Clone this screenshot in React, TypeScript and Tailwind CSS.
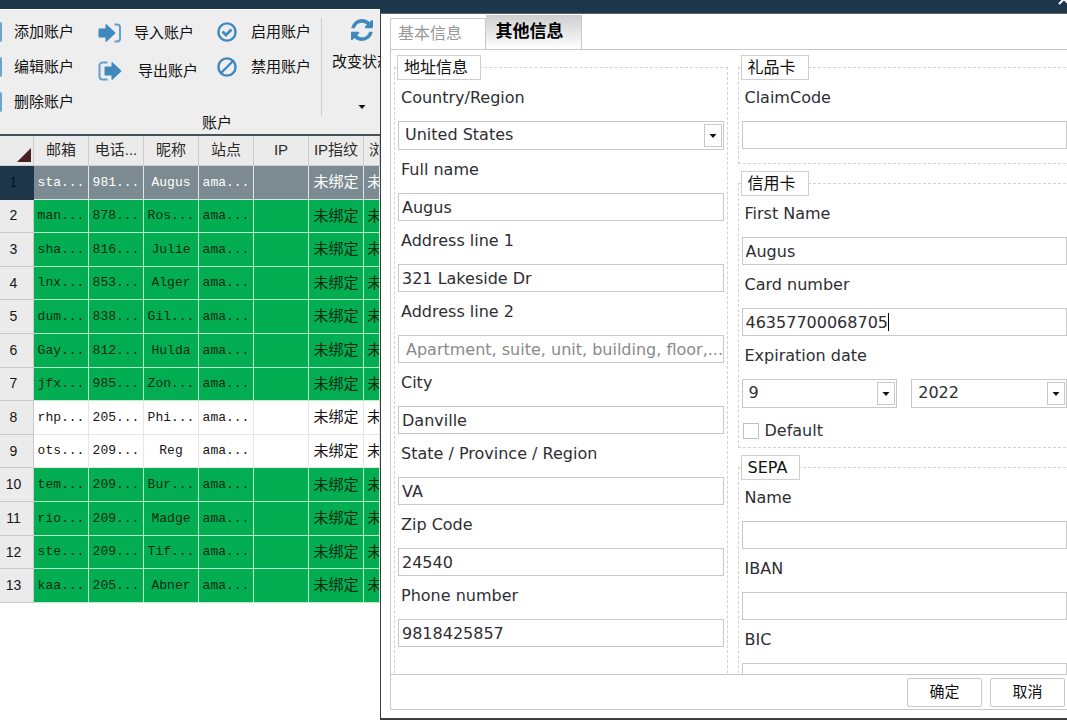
import React, { useState } from "react";

const cjk = "font-['Liberation_Sans','Noto_Sans_CJK_SC',sans-serif]";
const field = "font-['DejaVu_Sans','Noto_Sans_CJK_SC',sans-serif]";

function ImportIcon() {
  return (
    <svg viewBox="0 0 24 20" className="h-5 w-6 shrink-0" fill="none">
      <path d="M0.5 6.500q0-1 1-1h6V2q0-1.500 1.200-.6L17 9.300q.8.700 0 1.400l-8.300 7.900Q7.500 19.500 7.500 18v-3.500h-6q-1 0-1-1z" fill="#3f88c0" />
      <path d="M16.500 1.500h2.500a3 3 0 0 1 3 3v11a3 3 0 0 1-3 3h-2.500" stroke="#62a0cf" strokeWidth="2" />
    </svg>
  );
}

function ExportIcon() {
  return (
    <svg viewBox="0 0 24 20" className="h-5 w-6 shrink-0" fill="none">
      <path d="M6.500 6.500q0-1 1-1h6V2q0-1.500 1.200-.6L23 9.300q.8.700 0 1.400l-8.300 7.900q-1.200.9-1.200-.6v-3.500h-6q-1 0-1-1z" fill="#3f88c0" />
      <path d="M9.500 1.500h-5a3 3 0 0 0-3 3v11a3 3 0 0 0 3 3h5" stroke="#62a0cf" strokeWidth="2" />
    </svg>
  );
}

function EnableIcon() {
  return (
    <svg viewBox="0 0 20 20" className="size-5 shrink-0" fill="none" stroke="#3f88c0">
      <circle cx="10" cy="10" r="8.600" strokeWidth="2.400" />
      <path d="M5.500 9.500l3.500 3.500 5.500-5.500" strokeWidth="2.800" />
    </svg>
  );
}

function DisableIcon() {
  return (
    <svg viewBox="0 0 20 20" className="size-5 shrink-0" fill="none" stroke="#3f88c0" strokeWidth="2.400">
      <circle cx="10" cy="10" r="8.600" />
      <path d="M4 16L16 4" />
    </svg>
  );
}

function RefreshIcon() {
  return (
    <svg viewBox="0 0 1536 1536" className="size-[22px]" fill="#3f88c0">
      <path d="M1511 928q0 5-1 7-64 268-268 434.500T764 1536q-146 0-282.500-55T238 1324l-129 129q-19 19-45 19t-45-19-19-45V960q0-26 19-45t45-19h448q26 0 45 19t19 45-19 45l-137 137q71 66 161 102t187 36q134 0 250-65t186-179q11-17 53-117 8-23 30-23h192q13 0 22.500 9.500t9.500 22.500zm25-800v448q0 26-19 45t-45 19h-448q-26 0-45-19t-19-45 19-45l138-138Q969 256 768 256q-134 0-250 65T332 500q-11 17-53 117-8 23-30 23H50q-13 0-22.500-9.500T18 608v-7q65-268 270-434.500T768 0q146 0 284 55.500T1297 212l130-129q19-19 45-19t45 19 19 45z" />
    </svg>
  );
}

function Caret() {
  return (
    <svg viewBox="0 0 8 4" className="h-1 w-2" fill="#111">
      <path d="M0.500 0h7L4 4z" />
    </svg>
  );
}

const ribbonButton = "flex items-center whitespace-nowrap";

function Ribbon() {
  return (
    <div className="flex h-[125px] border-t border-white bg-[#eeeeee] text-[15px] leading-5 text-[#111]">
      <div className="flex w-[321px] shrink-0 flex-col pt-1">
        <div className="flex h-[99px] items-start">
          <div className="flex w-[98px] flex-col">
            {["添加账户", "编辑账户", "删除账户"].map((t) => (
              <button key={t} className={`${ribbonButton} h-[35px] gap-3`}>
                <span className="h-5 w-[2px] rounded-r-sm bg-[#6aa5cf]" />
                {t}
              </button>
            ))}
          </div>
          <div className="flex w-[119px] flex-col">
            <button className={`${ribbonButton} h-[38px] gap-3`}>
              <ImportIcon />
              导入账户
            </button>
            <button className={`${ribbonButton} h-[38px] gap-4`}>
              <ExportIcon />
              导出账户
            </button>
          </div>
          <div className="flex flex-col">
            <button className={`${ribbonButton} h-[35px] gap-[14px]`}>
              <EnableIcon />
              启用账户
            </button>
            <button className={`${ribbonButton} h-[35px] gap-[14px]`}>
              <DisableIcon />
              禁用账户
            </button>
          </div>
        </div>
        <div className="pl-[202px]">账户</div>
      </div>
      <div className="mt-2 mb-[18px] w-px shrink-0 bg-[#cccccc]" />
      <button className="flex w-20 shrink-0 flex-col items-center whitespace-nowrap pt-[9px]">
        <RefreshIcon />
        <span className="mt-[11px]">改变状态</span>
        <span className="mt-[33px]">
          <Caret />
        </span>
      </button>
    </div>
  );
}

const rows: [string, string, string][] = [
  ["sta...", "981...", "Augus"],
  ["man...", "878...", "Ros..."],
  ["sha...", "816...", "Julie"],
  ["lnx...", "853...", "Alger"],
  ["dum...", "838...", "Gil..."],
  ["Gay...", "812...", "Hulda"],
  ["jfx...", "985...", "Zon..."],
  ["rhp...", "205...", "Phi..."],
  ["ots...", "209...", "Reg"],
  ["tem...", "209...", "Bur..."],
  ["rio...", "209...", "Madge"],
  ["ste...", "209...", "Tif..."],
  ["kaa...", "205...", "Abner"],
];

function AccountTable() {
  const head =
    "border-r border-b border-[#cdcdcd] p-0 text-[15px] font-normal whitespace-nowrap overflow-hidden";
  return (
    <table className="h-[469px] w-full table-fixed border-separate border-spacing-0 border-t-2 border-[#43535c] text-[#151515]">
      <thead>
        <tr className="h-[30px] bg-[#ebebeb] text-[#2b2b2b]">
          <th className={`${head} w-[34px] align-bottom`}>
            <svg viewBox="0 0 14 14" className="mb-[3px] ml-[17px] size-[14px]" fill="#4b1f22">
              <path d="M14 0v14H0z" />
            </svg>
          </th>
          {["邮箱", "电话...", "昵称", "站点", "IP", "IP指纹"].map((h) => (
            <th key={h} scope="col" className={`${head} w-[55px]`}>
              {h}
            </th>
          ))}
          <th scope="col" className={`${head} pl-[5px] text-left`}>
            浏
          </th>
        </tr>
      </thead>
      <tbody>
        {rows.map(([mail, phone, nick], i) => {
          const white = i === 7 || i === 8;
          const tone =
            i === 0
              ? "bg-[#7b8b91] text-white border-[#dfe6e8]"
              : white
                ? "bg-white border-[#e6e6e6]"
                : "bg-[#02ae51] text-[#0b2a12] border-[#b9efc9]";
          const cell = `border-r border-b p-0 overflow-hidden whitespace-nowrap ${tone}`;
          const mono = `${cell} text-center font-['Liberation_Mono',monospace] text-[13px]`;
          return (
            <tr key={i}>
              <th
                scope="row"
                className={`border-r border-b p-0 pr-[6px] text-center text-[14px] font-normal ${
                  i === 0 ? "border-[#1e364a] bg-[#1e364a] text-[#0b1218]" : "border-[#c9c9c9] bg-[#ebebeb]"
                }`}
              >
                {i + 1}
              </th>
              <td className={mono}>{mail}</td>
              <td className={mono}>{phone}</td>
              <td className={mono}>{nick}</td>
              <td className={mono}>ama...</td>
              <td className={cell} />
              <td className={`${cell} text-center text-[15px]`}>未绑定</td>
              <td className={`${cell} pl-[3px] text-left text-[15px]`}>未</td>
            </tr>
          );
        })}
      </tbody>
    </table>
  );
}

function Label({ htmlFor, children }: { htmlFor: string; children: React.ReactNode }) {
  return (
    <label htmlFor={htmlFor} className="block pl-[3px] leading-6">
      {children}
    </label>
  );
}

function TextField(props: { id: string; label: string; value?: string; placeholder?: string; caret?: boolean }) {
  const [value, setValue] = useState(props.value ?? "");
  return (
    <div>
      <Label htmlFor={props.id}>{props.label}</Label>
      <div className="relative mt-[11px]">
        <input
          id={props.id}
          value={value}
          placeholder={props.placeholder}
          onChange={(e) => setValue(e.target.value)}
          className={`block h-7 w-full border border-[#c8c8c8] bg-white outline-none placeholder:text-[#8a8a8a] ${
            props.placeholder ? "pl-[7px]" : "px-[3px]"
          }`}
        />
        {props.caret && (
          <span className="pointer-events-none absolute top-[5px] left-[146px] h-[18px] w-px bg-black" />
        )}
      </div>
    </div>
  );
}

function SelectBox({ id, label, options }: { id: string; label: string; options: string[] }) {
  return (
    <div className="relative min-w-0 flex-1">
      <select
        id={id}
        aria-label={label}
        className="block h-[29px] w-full appearance-none border border-[#c8c8c8] bg-white pr-6 pb-[2px] pl-[6px] outline-none"
      >
        {options.map((o) => (
          <option key={o}>{o}</option>
        ))}
      </select>
      <span className="pointer-events-none absolute inset-y-[3px] right-[2px] flex w-[18px] items-center justify-center border border-[#c8c8c8] bg-white">
        <Caret />
      </span>
    </div>
  );
}

function Group({ title, className, children }: { title: string; className: string; children: React.ReactNode }) {
  return (
    <fieldset className={`flex min-w-0 flex-col border border-dashed border-[#d2d2d2] px-[3px] pt-[6px] ${className}`}>
      <legend className="-ml-px h-[25px] border border-[#d0d0d0] bg-white pr-3 pl-[6px] leading-6 text-[#111]">
        {title}
      </legend>
      <div className="flex flex-col gap-2">{children}</div>
    </fieldset>
  );
}

function AccountDialog() {
  const action = "h-[29px] w-[75px] rounded-xs border border-[#c8c8c8] bg-white text-[15px] text-[#111]";
  return (
    <section
      role="dialog"
      aria-label="其他信息"
      className={`-mr-3 mb-[5px] flex min-w-0 flex-1 flex-col border-b-2 border-[#3a3a3f] bg-white text-[16px] text-[#2e2e33] ${field}`}
    >
      <header className="flex h-[14px] shrink-0 justify-end overflow-hidden border-b border-[#5b6670] bg-[#1f374b] pr-[9px]">
        <button aria-label="关闭" className="-mt-[8px] h-[14px] text-white">
          <svg viewBox="0 0 12 12" className="size-3" stroke="currentColor" strokeWidth="2">
            <path d="M1 1l10 10M11 1L1 11" />
          </svg>
        </button>
      </header>
      <div className="flex min-h-0 flex-1 flex-col border-l border-[#3a3a3f] pt-px pr-1 pb-2 pl-[9px]">
        <div role="tablist" className="flex h-[34px] shrink-0 items-end">
          <button
            role="tab"
            aria-selected={false}
            className="h-[31px] w-24 border border-b-0 border-[#c8c8c8] bg-white pr-4 text-[#999]"
          >
            基本信息
          </button>
          <button
            role="tab"
            aria-selected
            className="h-[34px] w-24 border-r border-[#c8c8c8] bg-linear-to-b from-[#cfcfcf] via-[#e6e6e6] to-white pr-2 text-[17px] font-bold text-black"
          >
            其他信息
          </button>
        </div>
        <div className="grid min-h-0 flex-1 grid-cols-2 gap-[10px] overflow-hidden border border-[#c8c8c8] px-[3px] pt-[5px]">
          <Group title="地址信息" className="pb-[27px]">
            <div>
              <Label htmlFor="country">Country/Region</Label>
              <div className="mt-[11px] flex">
                <SelectBox id="country" label="Country/Region" options={["United States"]} />
              </div>
            </div>
            <TextField id="fullname" label="Full name" value="Augus" />
            <TextField id="line1" label="Address line 1" value="321 Lakeside Dr" />
            <TextField id="line2" label="Address line 2" placeholder="Apartment, suite, unit, building, floor,..." />
            <TextField id="city" label="City" value="Danville" />
            <TextField id="state" label="State / Province / Region" value="VA" />
            <TextField id="zip" label="Zip Code" value="24540" />
            <TextField id="phone" label="Phone number" value="9818425857" />
          </Group>
          <div className="flex min-w-0 flex-col gap-[7px]">
            <Group title="礼品卡" className="pb-[14px]">
              <TextField id="claim" label="ClaimCode" />
            </Group>
            <Group title="信用卡" className="pb-1">
              <TextField id="first" label="First Name" value="Augus" />
              <TextField id="card" label="Card number" value="46357700068705" caret />
              <div>
                <Label htmlFor="month">Expiration date</Label>
                <div className="mt-[11px] flex gap-[14px]">
                  <SelectBox id="month" label="Month" options={["9"]} />
                  <SelectBox id="year" label="Year" options={["2022"]} />
                </div>
              </div>
              <label className="mt-[3px] flex items-center gap-[6px] pl-px leading-6">
                <input type="checkbox" className="size-4 appearance-none border border-[#c0c0c0] bg-white" />
                Default
              </label>
            </Group>
            <Group title="SEPA" className="pb-4">
              <TextField id="sepaname" label="Name" />
              <TextField id="iban" label="IBAN" />
              <TextField id="bic" label="BIC" />
            </Group>
          </div>
        </div>
        <footer className="flex h-[35px] shrink-0 items-center justify-end gap-2 border border-t-0 border-[#c8c8c8] pr-[9px]">
          <button className={action}>确定</button>
          <button className={action}>取消</button>
        </footer>
      </div>
    </section>
  );
}

export default function App() {
  return (
    <main className={`flex h-screen overflow-hidden bg-white ${cjk}`}>
      <div className="w-[380px] shrink-0 overflow-hidden">
        <div className="h-[9px] bg-[#1f374b]" />
        <Ribbon />
        <AccountTable />
      </div>
      <AccountDialog />
    </main>
  );
}
